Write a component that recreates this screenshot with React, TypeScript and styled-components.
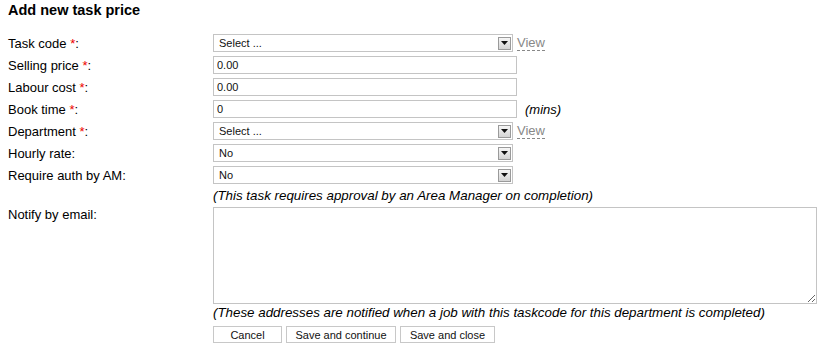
import styled, { createGlobalStyle } from "styled-components";

const GlobalStyle = createGlobalStyle`
  body {
    margin: 0;
    background: #fff;
    font-family: "Liberation Sans", Arial, sans-serif;
    color: #000;
  }
`;

type SelectProps = { value: string };

const FakeSelect = ({ value }: SelectProps) => {
  return (
    <SelectBox>
      <SelectValue>{value}</SelectValue>
      <ArrowBox>
        <svg width="7" height="4" viewBox="0 0 7 4">
          <path d="M0 0 H7 L3.5 4 Z" fill="#111" />
        </svg>
      </ArrowBox>
    </SelectBox>
  );
};

const Req = () => <Star>*</Star>;

export default function App() {
  return (
    <Page>
      <GlobalStyle />
      <Title>Add new task price</Title>
      <Form>
        <Label>
          Task code <Req />:
        </Label>
        <Field>
          <FakeSelect value="Select ..." />
          <ViewLink>View</ViewLink>
        </Field>

        <Label>
          Selling price <Req />:
        </Label>
        <Field>
          <TextInput defaultValue="0.00" />
        </Field>

        <Label>
          Labour cost <Req />:
        </Label>
        <Field>
          <TextInput defaultValue="0.00" />
        </Field>

        <Label>
          Book time <Req />:
        </Label>
        <Field>
          <TextInput defaultValue="0" />
          <Hint>(mins)</Hint>
        </Field>

        <Label>
          Department <Req />:
        </Label>
        <Field>
          <FakeSelect value="Select ..." />
          <ViewLink>View</ViewLink>
        </Field>

        <Label>Hourly rate:</Label>
        <Field>
          <FakeSelect value="No" />
        </Field>

        <Label>Require auth by AM:</Label>
        <Field>
          <FakeSelect value="No" />
        </Field>

        <span />
        <Note>(This task requires approval by an Area Manager on completion)</Note>

        <Label $top>Notify by email:</Label>
        <Field $column>
          <EmailArea />
          <Note>
            (These addresses are notified when a job with this taskcode for this
            department is completed)
          </Note>
          <Buttons>
            <Button $width={69}>Cancel</Button>
            <Button $width={110}>Save and continue</Button>
            <Button $width={95}>Save and close</Button>
          </Buttons>
        </Field>
      </Form>
    </Page>
  );
}

const Page = styled.div`
  padding: 2px 8px 0;
`;

const Title = styled.h2`
  margin: 0;
  font-size: 14.5px;
  line-height: 16px;
  font-weight: bold;
`;

const Form = styled.div`
  display: grid;
  grid-template-columns: 205px 1fr;
  row-gap: 4px;
  margin-top: 16px;
`;

const Label = styled.div<{ $top?: boolean }>`
  display: flex;
  align-items: ${({ $top }) => ($top ? "flex-start" : "center")};
  font-size: 13px;
  line-height: 15px;
  height: ${({ $top }) => ($top ? "auto" : "18px")};
  white-space: pre;
`;

const Star = styled.span`
  color: #e00;
`;

const Field = styled.div<{ $column?: boolean }>`
  display: flex;
  flex-direction: ${({ $column }) => ($column ? "column" : "row")};
  align-items: ${({ $column }) => ($column ? "flex-start" : "center")};
  min-height: 18px;
`;

const SelectBox = styled.div`
  box-sizing: border-box;
  width: 300px;
  height: 18px;
  border: 1px solid #c4c4c4;
  background: #fff;
  display: flex;
  align-items: center;
  padding: 0 1px 0 5px;
`;

const SelectValue = styled.span`
  flex: 1;
  font-size: 11px;
  color: #111;
`;

const ArrowBox = styled.span`
  box-sizing: border-box;
  width: 13px;
  height: 13px;
  border: 1px solid #9a9a9a;
  background: linear-gradient(#f6f6f6, #d4d4d4);
  display: flex;
  align-items: center;
  justify-content: center;
`;

const ViewLink = styled.span`
  margin-left: 4px;
  font-size: 13px;
  line-height: 14px;
  color: #888;
  border-bottom: 1px dashed #888;
`;

const TextInput = styled.input`
  box-sizing: border-box;
  width: 304px;
  height: 18px;
  margin: 0;
  padding: 0 3px;
  border: 1px solid #c4c4c4;
  font-family: "Liberation Sans", Arial, sans-serif;
  font-size: 11px;
  color: #111;
  outline: none;
`;

const Hint = styled.span`
  margin-left: 8px;
  font-size: 13px;
  font-style: italic;
`;

const Note = styled.div`
  font-size: 13.35px;
  line-height: 15px;
  font-style: italic;
  white-space: nowrap;
`;

const EmailArea = styled.textarea`
  box-sizing: border-box;
  width: 604px;
  height: 97px;
  margin: 0 0 1px;
  border: 1px solid #c4c4c4;
  outline: none;
  display: block;
`;

const Buttons = styled.div`
  display: flex;
  gap: 4px;
  margin-top: 6px;
`;

const Button = styled.button<{ $width: number }>`
  box-sizing: border-box;
  width: ${({ $width }) => $width}px;
  height: 17px;
  padding: 0;
  border: 1px solid #c8c8c8;
  background: #fff;
  font-family: "Liberation Sans", Arial, sans-serif;
  font-size: 11px;
  color: #111;
`;
